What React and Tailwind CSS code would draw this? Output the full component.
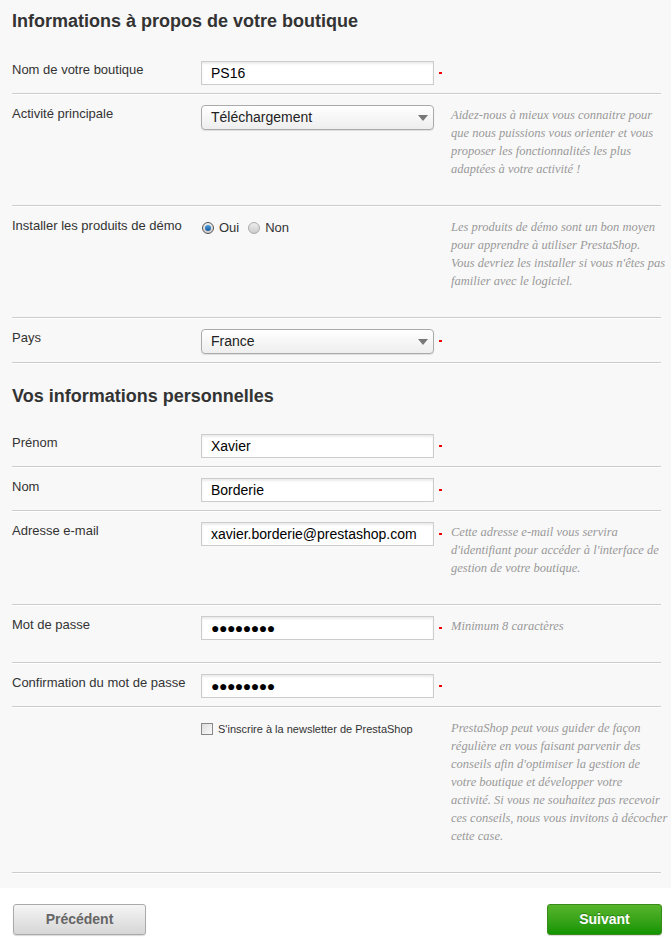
import React from 'react';

const sans = { fontFamily: '"Liberation Sans", Arial, sans-serif' };

const Star = () => <span className="ml-[5px] mt-[11px] h-[2px] w-[3px] bg-[#e00] self-start shrink-0" />;

const Help = ({ lines }) => (
  <p className="w-[209px] shrink-0 pt-[1px] pb-[19px] text-[12.5px] leading-[18px] italic text-[#999] font-['Liberation_Serif',serif]">
    {lines.map((l, i) => (
      <span key={i} className="block whitespace-nowrap">{l}</span>
    ))}
  </p>
);

const Row = ({ label, children, help, required = true }) => (
  <div className="flex border-b border-[#ccc] shadow-[0_1px_0_#fff] pt-[11px] pb-2">
    <div className="w-[189px] shrink-0 pt-[1px] text-[13px] leading-[16px] text-[#333]">{label}</div>
    <div className="flex w-[250px] shrink-0 items-start">
      {children}
      {required && <Star />}
    </div>
    {help ? <Help lines={help} /> : null}
  </div>
);

const TextInput = ({ value, password }) => (
  <div className="flex h-[24px] w-[233px] items-center border border-[#ccc] bg-white pl-[9px] text-[14px] text-black shadow-[inset_0_2px_2px_rgba(0,0,0,0.08)]">
    {password ? <span className="text-[14px] tracking-[-0.5px] leading-none">●●●●●●●●</span> : value}
  </div>
);

const Select = ({ value }) => (
  <div className="flex h-[25px] w-[233px] items-center justify-between rounded-[4px] border border-[#aaa] bg-gradient-to-b from-white to-[#eee] pl-[9px] pr-[5px] text-[14px] text-[#222] shadow-[0_1px_1px_rgba(0,0,0,0.1)]">
    <span>{value}</span>
    <svg width="10" height="6" viewBox="0 0 10 6"><path d="M0 0h10L5 6z" fill="#777" /></svg>
  </div>
);

const Radio = ({ checked, label }) => (
  <label className="flex items-center mr-[9px]">
    <span className={`flex h-[12px] w-[12px] items-center justify-center rounded-full border ${checked ? 'border-[#555]' : 'border-[#aaa]'} bg-gradient-to-b from-[#eee] to-[#ccc]`}>
      {checked && <span className="h-[6px] w-[6px] rounded-full bg-gradient-to-b from-[#4aa0e0] to-[#1a5a9a]" />}
    </span>
    <span className="ml-[5px] text-[13px] text-[#333]">{label}</span>
  </label>
);

export default function App() {
  return (
    <div style={sans} className="w-[671px] bg-white">
      <div className="bg-[#f8f8f8] pl-3 pr-[10px] pb-[15px]">
        <h2 className="pt-[10px] pb-[18px] text-[18px] leading-[22px] font-bold text-[#333]">
          Informations à propos de votre boutique
        </h2>
        <Row label="Nom de votre boutique">
          <TextInput value="PS16" />
        </Row>
        <Row
          label="Activité principale"
          required={false}
          help={[
            'Aidez-nous à mieux vous connaitre pour',
            'que nous puissions vous orienter et vous',
            'proposer les fonctionnalités les plus',
            'adaptées à votre activité !',
          ]}
        >
          <Select value="Téléchargement" />
        </Row>
        <Row
          label="Installer les produits de démo"
          required={false}
          help={[
            'Les produits de démo sont un bon moyen',
            'pour apprendre à utiliser PrestaShop.',
            "Vous devriez les installer si vous n'êtes pas",
            'familier avec le logiciel.',
          ]}
        >
          <div className="flex items-center pl-[1px] pt-[1px]">
            <Radio checked label="Oui" />
            <Radio label="Non" />
          </div>
        </Row>
        <Row label="Pays">
          <Select value="France" />
        </Row>

        <h2 className="pt-[22px] pb-[16px] text-[18px] leading-[22px] font-bold text-[#333]">
          Vos informations personnelles
        </h2>
        <Row label="Prénom">
          <TextInput value="Xavier" />
        </Row>
        <Row label="Nom">
          <TextInput value="Borderie" />
        </Row>
        <Row
          label="Adresse e-mail"
          help={[
            'Cette adresse e-mail vous servira',
            "d'identifiant pour accéder à l'interface de",
            'gestion de votre boutique.',
          ]}
        >
          <TextInput value="xavier.borderie@prestashop.com" />
        </Row>
        <Row label="Mot de passe" help={['Minimum 8 caractères']}>
          <TextInput password />
        </Row>
        <Row label="Confirmation du mot de passe">
          <TextInput password />
        </Row>
        <Row
          label=""
          required={false}
          help={[
            'PrestaShop peut vous guider de façon',
            'régulière en vous faisant parvenir des',
            "conseils afin d'optimiser la gestion de",
            'votre boutique et développer votre',
            'activité. Si vous ne souhaitez pas recevoir',
            'ces conseils, nous vous invitons à décocher',
            'cette case.',
          ]}
        >
          <label className="flex items-center pt-[3px]">
            <span className="h-[12px] w-[12px] border border-[#888] bg-gradient-to-br from-[#ddd] to-[#fafafa]" />
            <span className="ml-[5px] text-[11px] text-[#333]">S'inscrire à la newsletter de PrestaShop</span>
          </label>
        </Row>
      </div>
      <div className="flex justify-between pl-[13px] pr-[9px] pt-[16px] pb-[6px]">
        <button className="h-[31px] w-[133px] rounded-[3px] border border-[#aaa] bg-gradient-to-b from-[#f5f5f5] to-[#d6d6d6] text-[14px] font-bold text-[#666] shadow-[0_1px_1px_rgba(0,0,0,0.15)]">
          Précédent
        </button>
        <button className="h-[31px] w-[115px] rounded-[3px] border border-[#3a8a1a] bg-gradient-to-b from-[#56b52b] to-[#0e9400] text-[14px] font-bold text-white shadow-[0_1px_1px_rgba(0,0,0,0.15)] [text-shadow:0_-1px_0_rgba(0,0,0,0.3)]">
          Suivant
        </button>
      </div>
    </div>
  );
}
